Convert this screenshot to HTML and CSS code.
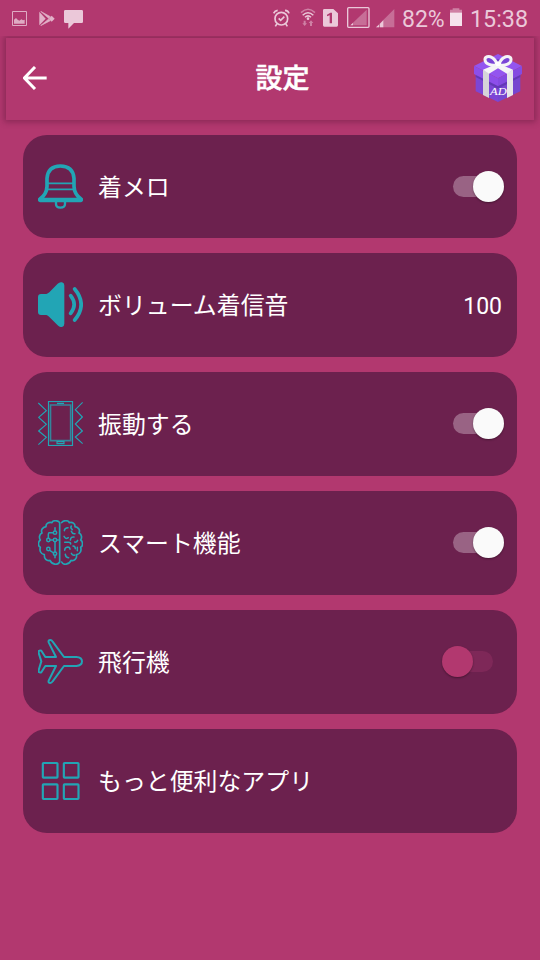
FILE: index.html
```html
<!DOCTYPE html>
<html lang="ja">
<head>
<meta charset="utf-8">
<title>設定</title>
<link rel="stylesheet" href="styles.css">
</head>
<body>
<div class="status">
  <svg class="s-pic" width="15" height="15" viewBox="0 0 45 45"><path d="M1.500 1.500H43.500V43.500H1.500Z" fill="none" stroke="currentColor" stroke-width="3"/><path d="M6 38V26L12 21L17 26L22 29L28 25L33 28L38 26V38Z" fill="currentColor"/></svg>
  <svg class="s-play" width="16" height="15" viewBox="0 0 48 45"><path d="M1 2V43L20 23Z" fill="currentColor"/><path d="M5 1L34 17L29 22ZM5 44L34 29L29 24Z" fill="currentColor" stroke="currentColor" stroke-width="2"/><path d="M29 23L38 14L47 23L38 32Z" fill="currentColor"/></svg>
  <svg class="s-chat" width="19" height="19" viewBox="0 0 57 57"><path d="M4 0H53Q57 0 57 4V35Q57 39 53 39H30L13 56V39H4Q0 39 0 35V4Q0 0 4 0Z" fill="currentColor"/></svg>
  <svg class="s-alarm" width="17" height="19" viewBox="0 0 51 57"><g fill="none" stroke="currentColor" stroke-width="5"><circle cx="25" cy="29" r="19"/><path d="M2 13Q5 5 14 4M36 4Q46 5 48 13M12 44L7 52M38 44L43 52M17 28L23 34L34 23"/></g></svg>
  <svg class="s-wifi" width="16" height="19" viewBox="0 0 48 57"><g fill="none" stroke="currentColor" stroke-width="4.500"><path d="M3 14Q24 -6 45 14" opacity=".5"/><path d="M8 22Q24 6 40 22M15 28Q24 19 33 28"/></g><circle cx="24" cy="32" r="4" fill="currentColor"/><path d="M11 38H17V46H21L14 54L7 46H11ZM30 54H36V45H40L33 37L26 45H30Z" fill="currentColor" opacity=".5"/></svg>
  <svg class="s-sim" width="15" height="18" viewBox="0 0 45 54"><path fill-rule="evenodd" d="M4 0H31L45 13V49Q45 53 41 53H4Q0 53 0 49V4Q0 0 4 0ZM22 11L12 17V22L20 19V43H27V11Z" fill="currentColor"/></svg>
  <svg class="s-box" width="23" height="21" viewBox="0 0 69 63"><rect x="2" y="2" width="64" height="59" rx="3" fill="none" stroke="currentColor" stroke-width="4"/><path d="M10 55L59 8V55Z" fill="currentColor" opacity=".38"/><path d="M10 55L18 48V55Z" fill="currentColor"/></svg>
  <svg class="s-signal" width="19" height="19" viewBox="0 0 57 57"><path d="M0 55L55 0V55Z" fill="currentColor" opacity=".38"/><path d="M0 55L9 47V55ZM12 55V44L22 34V55Z" fill="currentColor"/></svg>
  <span class="s-percent">82%</span>
  <svg class="s-battery" width="12" height="19" viewBox="0 0 36 57"><path d="M0 5H8V1H28V5H36V15H0Z" fill="currentColor" opacity=".5"/><path d="M0 14H36V54H0Z" fill="#f5e2ec"/></svg>
  <span class="s-time">15:38</span>
</div>
<header class="toolbar">
  <svg class="back" width="24" height="24" viewBox="0 0 72 72"><path d="M36 3L4 36L36 69M4 36H71" fill="none" stroke="#fff" stroke-width="9"/></svg>
  <h1>設定</h1>
  <svg class="gift" width="48" height="48" viewBox="0 0 144 144">
    <path d="M5 50L72 82V144L5 112Z" fill="#7c46d5"/><path d="M139 50L72 82V144L139 112Z" fill="#7646d0"/>
    <path d="M0 36L72 0L144 36L72 73Z" fill="#9355ef"/>
    <path d="M0 36L72 73V96L0 60Z" fill="#8d4eea"/><path d="M144 36L72 73V96L144 60Z" fill="#844be1"/>
    <path d="M5 63L72 97L139 63V69L72 104L5 69Z" fill="#6338b6"/>
    <path d="M48 27L72 14L97 27L72 40Z" fill="#7141ca"/>
    <path d="M27 47L45 57V132L27 123Z" fill="#d6d5d9"/><path d="M117 47L99 57V132L117 123Z" fill="#e7e6e9"/>
    <path d="M27 47L72 28L117 47L99 59L72 43L45 59Z" fill="#f5f4f6"/>
    <path d="M70 32C52 37 34 30 33 18C32 8 44 5 53 10C63 15 67 24 70 32ZM74 32C92 37 110 30 111 18C112 8 100 5 91 10C81 15 77 24 74 32Z" fill="#7a45d7" stroke="#f5f4f6" stroke-width="9"/>
    <path d="M62 27L72 22L82 27L77 36H67Z" fill="#fff"/>
    <text x="73" y="124" text-anchor="middle" textLength="50" lengthAdjust="spacingAndGlyphs" class="ad">AD</text>
  </svg>
</header>
<main>
  <section class="card">
    <svg class="icon" viewBox="0 0 135 135"><g fill="none" stroke="currentColor"><path d="M6 105Q26 91 27 67V43Q30 6 67 6Q105 6 108 43V67Q109 91 129 105V109H6Z" stroke-width="11" stroke-linejoin="round"/><path d="M27 58H108M25 76H110" stroke-width="5"/><path d="M5 107H130" stroke-width="11" stroke-linecap="round"/><path d="M54 112V120Q54 131 67 131Q81 131 81 120V112" stroke-width="7"/></g></svg>
    <span class="label">着メロ</span><i class="switch on"></i>
  </section>
  <section class="card">
    <svg class="icon" viewBox="0 0 135 135"><path d="M9 36H25Q30 35 34 31L59 5Q65 -1 72 1Q79 3 79 10V125Q79 133 72 135Q65 136 59 130L34 105Q30 100 25 99H9Q0 99 0 90V45Q0 36 9 36Z" fill="currentColor"/><g fill="none" stroke="currentColor" stroke-width="11" stroke-linecap="round"><path d="M98 41Q119 68 98 94M110 21Q149 68 110 114"/></g></svg>
    <span class="label">ボリューム着信音</span><span class="value">100</span>
  </section>
  <section class="card">
    <svg class="icon" viewBox="0 0 135 135"><g fill="none" stroke="currentColor" stroke-width="3.500"><rect x="31.500" y="1.500" width="72" height="132"/><path d="M37.500 12H98V119H37.500Z" stroke-width="5" opacity=".75"/><path d="M1 6L25 29L2 49L25 70L2 90L25 109L1 131M134 4L112 26L133 48L112 69L133 90L112 108L134 128"/><path d="M57 7H78M57 122H78V128H57Z"/></g></svg>
    <span class="label">振動する</span><i class="switch on"></i>
  </section>
  <section class="card">
    <svg class="icon" viewBox="0 0 135 135"><g fill="none" stroke="currentColor" stroke-width="5" stroke-linecap="round" stroke-linejoin="round">
      <path d="M65 8C60 0 44 0 42 8C32 5 23 11 24 20C13 22 8 30 12 39C3 43 3 54 7 60C-1 66 0 78 7 82C4 92 8 102 19 104C18 116 26 124 36 121C42 134 59 137 65 126Z"/>
      <path d="M71 8C76 0 91 0 94 8C103 5 112 11 111 20C122 22 127 30 123 39C132 43 132 54 128 60C136 66 135 78 128 82C131 92 127 102 116 104C117 116 109 124 99 121C93 134 76 137 71 126"/>
      <g stroke-width="4.500"><circle cx="51" cy="38" r="5"/><circle cx="31" cy="60" r="5"/><circle cx="51" cy="60" r="5"/><circle cx="31" cy="87" r="5"/><circle cx="51" cy="101" r="5"/><path d="M51 33V23M46 38H34Q31 38 31 43V55M36 60H46M51 66V96M35 91L47 99M51 106V113M56 60H61"/></g>
      <path d="M79 32Q80 23 90 23M100 18Q96 24 103 29M100 34Q103 43 111 41M78 49Q82 59 91 53M97 60Q99 49 108 51M119 61Q116 68 110 66M80 67H92Q98 67 98 72M80 91Q80 82 89 81Q96 81 96 88M105 78Q112 79 112 86M118 82V92M82 103Q83 113 92 113M100 100Q103 108 111 105" stroke-width="4.500"/>
    </g></svg>
    <span class="label">スマート機能</span><i class="switch on"></i>
  </section>
  <section class="card">
    <svg class="icon" viewBox="0 0 135 135"><path d="M54 54L32 10Q30 3 37 3Q41 3 44 8L78 54H115Q132 55 132 67Q132 80 115 81H78L44 127Q41 132 37 132Q30 132 32 125L54 81H22L10 100Q6 102 2 99V93L10 67L2 42V36Q6 33 10 35L22 54Z" fill="none" stroke="currentColor" stroke-width="6" stroke-linejoin="round"/></svg>
    <span class="label">飛行機</span><i class="switch"></i>
  </section>
  <section class="card">
    <svg class="icon" viewBox="0 0 135 135"><g fill="none" stroke="currentColor" stroke-width="6.500"><rect x="14.500" y="15" width="44" height="44" rx="2"/><rect x="77.500" y="15" width="44" height="44" rx="2"/><rect x="14.500" y="79" width="44" height="44" rx="2"/><rect x="77.500" y="79" width="44" height="44" rx="2"/></g></svg>
    <span class="label">もっと便利なアプリ</span>
  </section>
</main>
</body>
</html>
```
FILE: styles.css
```css
* { box-sizing: border-box; }
body {
  margin: 0;
  height: 960px;
  overflow: hidden;
  background: #b2386f;
  color: #fff;
  font-family: Roboto, "Noto Sans CJK JP", sans-serif;
}
svg { display: block; flex: none; }
.status {
  position: relative;
  z-index: 1;
  display: flex;
  align-items: flex-start;
  height: 36px;
  padding: 0 0 0 12px;
  background: #b2386f;
  color: #ebc8d9;
  font-size: 23.3px;
  line-height: 28px;
}
.s-pic { margin-top: 11px; opacity: .8; }
.s-play { margin: 11px 0 0 12px; opacity: .85; }
.s-chat { margin: 10px 0 0 9px; }
.s-alarm { margin: 9px 0 0 190px; }
.s-wifi { margin: 8px 0 0 10px; }
.s-sim { margin: 9px 0 0 7px; }
.s-box { margin: 7px 0 0 9px; }
.s-signal { margin: 9px 0 0 6px; }
.s-percent { width: 48px; margin: 6px 0 0 7px; font-size: 23px; white-space: nowrap; }
.s-battery { margin-top: 8px; }
.s-time { margin: 5px 0 0 8px; }
.toolbar {
  display: grid;
  grid-template-columns: 24px 1fr 48px;
  align-items: center;
  height: 82px;
  margin: 2px 6px 15px;
  padding: 0 12px 0 17px;
  background: #b2386f;
  box-shadow: 0 0 6px 2px rgba(70, 15, 45, .38);
}
.back { margin-top: -2px; }
h1 {
  margin: 0;
  padding-left: 44px;
  font-size: 27px;
  line-height: 40px;
  font-weight: 500;
  -webkit-text-stroke: .5px #fff;
  text-align: center;
}
.gift { margin-top: -2px; }
.ad { font: italic 31px "Liberation Serif", serif; fill: #fff; }
main {
  display: flex;
  flex-direction: column;
  gap: 15px;
  padding: 0 23px;
}
.card {
  display: flex;
  align-items: flex-start;
  height: 104px;
  padding: 29px 13px 0 15px;
  border-radius: 24px;
  background: #6c214e;
}
.card:first-child { height: 103px; }
.icon { width: 45px; height: 45px; color: #22a5b5; }
.label {
  flex: 1;
  margin-left: 15px;
  font-size: 23.9px;
  line-height: 49px;
  white-space: nowrap;
}
.value { margin-right: 2px; font-size: 23px; line-height: 49px; }
.switch {
  position: relative;
  width: 40px;
  height: 21px;
  margin: 12px 11px 0 0;
  border-radius: 11px;
  background: #7e2858;
}
.switch::after {
  content: "";
  position: absolute;
  left: -11px;
  top: -5px;
  width: 31px;
  height: 31px;
  border-radius: 50%;
  background: #b2386f;
  box-shadow: 0 1px 2px rgba(0, 0, 0, .35);
}
.switch.on { background: #996384; }
.switch.on::after { left: 20px; background: #fafafa; }
```
